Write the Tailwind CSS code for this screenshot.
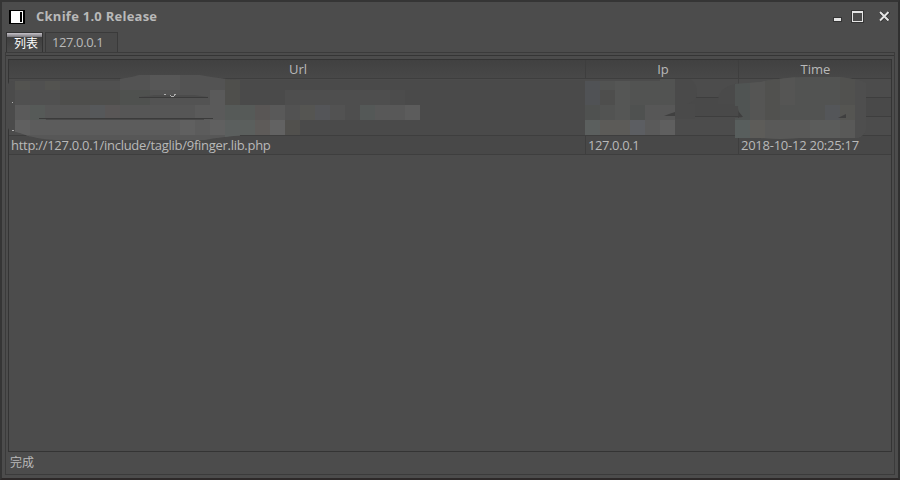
<!DOCTYPE html>
<html lang="zh">
<head>
<meta charset="utf-8">
<title>Cknife 1.0 Release</title>
<script src="https://cdn.jsdelivr.net/npm/@tailwindcss/browser@4"></script>
</head>
<body class="w-[900px] h-[480px] overflow-hidden bg-[#4c4c4c] text-[#b9b9b9] text-[13px] leading-[18px] font-['Open_Sans','Noto_Sans_CJK_SC',sans-serif]">
<div class="w-[900px] h-[480px] flex flex-col border-2 border-[#353535] border-r-[#303030] border-b-[#2d2929] px-[2px] pb-[3px]">
  <header class="h-[30px] shrink-0 flex items-center pl-[5px] pr-[5px] pb-[2px]">
    <svg class="w-4 h-[14px] relative top-px" viewBox="0 0 16 14" shape-rendering="crispEdges"><path fill="#000" d="M0 0h16v14H0z"/><path fill="#fff" d="M2 1h12v12H2z"/><path fill="#000" d="M11 2h2v10h-2z"/></svg>
    <h1 class="ml-[11px] font-bold text-[13px] w-[130px] whitespace-nowrap tracking-[0.25px]">Cknife 1.0 Release</h1>
    <svg class="ml-auto w-[60px] h-[14px]" viewBox="831 9 60 14" shape-rendering="crispEdges">
      <path fill="#343434" d="M833 17h9v5h-9zM851 10h13v13h-13z"/>
      <path fill="#e4e4e4" d="M834 18h7v3h-7z"/><path fill="#4a4a4a" d="M853 13h9v8h-9z"/>
      <path fill="none" stroke="#e4e4e4" d="M852.5 11.5h10v10h-10zM852 12.5h11"/>
      <path fill="none" stroke="#343434" stroke-width="4" d="M880 12l9 9M889 12l-9 9"/>
      <path fill="none" stroke="#e4e4e4" stroke-width="2" shape-rendering="auto" d="M880 12l8.5 8.5M888.500 12l-8.500 8.500"/>
    </svg>
  </header>
  <nav class="h-5 shrink-0 flex items-start pl-[2px] gap-[2px]">
    <div class="w-[37px] h-5 border border-b-0 border-[#333] bg-linear-to-b from-[#3b3b3b] to-[#4b4b4b] text-white">
      <div class="h-1 bg-linear-to-b from-[#c6c3c9] to-[#79777c]"></div>
      <div class="pl-[7px] text-[12px] leading-[13px]">列表</div>
    </div>
    <div class="w-[73px] h-5 border border-b-0 border-[#3a3a3a] bg-[#494949] pl-[6px] leading-[19px] tracking-[-0.4px]">127.0.0.1</div>
  </nav>
  <main class="flex-1 flex flex-col border border-[#3b3b3b] mx-px">
    <div class="h-[3px] shrink-0 border-b border-[#353535]"></div>
    <section class="relative h-[393px] mt-[3px] ml-[2px] mr-[2px] border border-[#343434] bg-[#4c4c4c]">
      <div class="grid grid-cols-[577px_153px_1fr] h-[19px] bg-linear-to-b from-[#414141] to-[#484848] border-b border-[#3e3e3e] text-center leading-[18px]">
        <div class="border-r border-[#3e3e3e] pl-[2px]">Url</div><div class="border-r border-[#3e3e3e] pl-[2px]">Ip</div><div class="pl-px">Time</div>
      </div>
      <div class="grid grid-cols-[577px_153px_1fr] h-[19px] border-b border-[#3e3e3e]"><div></div><div class="border-r border-[#424242]"></div></div>
      <div class="grid grid-cols-[577px_153px_1fr] h-[19px] border-b border-[#3e3e3e] bg-[#494949]"><div></div><div class="border-r border-[#424242]"></div></div>
      <div class="grid grid-cols-[577px_153px_1fr] h-[19px] border-b border-[#3e3e3e]"><div></div><div class="border-r border-[#424242]"></div></div>
      <div class="grid grid-cols-[577px_153px_1fr] h-[19px] border-b border-[#3e3e3e] bg-[#484848] leading-[18px] whitespace-nowrap">
        <div class="border-r border-[#3e3e3e] pl-[2px] tracking-[-0.28px]">http://127.0.0.1/include/taglib/9finger.lib.php</div><div class="border-r border-[#3e3e3e] pl-[2px] tracking-[-0.4px]">127.0.0.1</div><div class="pl-[2px] tracking-[-0.25px]">2018-10-12 20:25:17</div>
      </div>
      <svg class="absolute left-[-9px] top-[10px] w-[900px] h-[80px]" viewBox="0 70 900 80">
        <defs>
          <clipPath id="left"><path d="M6 89L9 82L18 80L110 80Q130 78 139 75H200Q228 80 240 80V135.500Q220 137 205 140H55Q35 139 20 133L9 130L6 124Z"/></clipPath>
          <clipPath id="right"><path d="M735 84L760 82Q785 77 805 77H840Q858 79 866 83V128Q865 136 857 138H800L780 139L760 138H735V118H742Q738 112 738 106H735Z"/></clipPath>
        </defs>
        <path fill="#4a4a4a" d="M240 80h345v55H240z"/>
        <g clip-path="url(#left)" shape-rendering="crispEdges">
          <path fill="#4b4b4b" d="M5 75h235v65H5z"/>
          <path fill="#505050" d="M15 81h225v24H15z"/>
          <path fill="#535350" d="M15 81h15v9H15zM45 81h15v9H45z"/>
          <path fill="#535353" d="M120 75h105v30H120z"/><path fill="#575757" d="M150 75h30v15h-30z"/>
          <path fill="#4e4e4c" d="M60 90h60v15H60zM225 78h15v27h-15z"/><path fill="#4f514f" d="M120 90h30v15h-30z"/>
          <path fill="#565656" d="M15 105h225v15H15z"/><path fill="#5a5a5a" d="M15 105h15v15H15zM195 105h15v15h-15zM210 90h15v30h-15z"/>
          <path fill="#56585a" d="M90 105h15v15H90z"/><path fill="#595656" d="M105 105h15v15h-15z"/><path fill="#565a58" d="M225 105h15v15h-15zM30 105h15v15H30z"/>
          <path fill="#5c5c5c" d="M15 120h225v15H15z"/><path fill="#606060" d="M15 120h15v20H15zM210 120h15v15h-15zM180 120h15v15h-15z"/><path fill="#575757" d="M15 135h225v5H15z"/><path fill="#5b5f5e" d="M225 120h15v20h-15z"/>
        </g>
        <g shape-rendering="crispEdges">
          <path fill="#4f4f4c" d="M225 80h15v25h-15z"/>
          <path fill="#4e4e4e" d="M285 90h105v15H285z"/><path fill="#4c4c4c" d="M390 90h15v15h-15z"/>
          <path fill="#555" d="M240 105h45v15h-45z"/><path fill="#565a58" d="M240 105h15v15h-15z"/><path fill="#595655" d="M255 105h15v15h-15z"/><path fill="#595959" d="M270 105h15v15h-15z"/>
          <path fill="#525252" d="M285 105h15v15h-15zM330 105h15v15h-15z"/><path fill="#555552" d="M300 105h15v15h-15z"/><path fill="#545558" d="M315 105h15v15h-15z"/><path fill="#4e4e4e" d="M345 105h15v15h-15z"/><path fill="#545857" d="M360 105h15v15h-15z"/><path fill="#585858" d="M375 105h30v15h-30z"/><path fill="#5c5c5c" d="M405 105h15v15h-15z"/>
          <path fill="#5b5f5d" d="M240 120h15v15h-15z"/><path fill="#5e5b59" d="M255 120h15v15h-15z"/><path fill="#626262" d="M270 120h15v15h-15z"/><path fill="#51504d" d="M285 120h15v15h-15z"/>
        </g>
        <path fill="#4b4b4b" d="M139 97L155 95H194L208 97Z"/>
        <path stroke="#3b3b3b" fill="none" d="M139 97.500H208M39 118.500H213"/>
        <path stroke="#484848" fill="none" d="M46 119.500H204"/>
        <path fill="#b0b0b0" d="M12 102h1v1h-1zM12 130h2v1h-2zM164 94h2v1h-2zM170 95h1v1h3v-2h2v1h-1v1h-1v1h-3v-1h-1z"/>
        <g shape-rendering="crispEdges">
          <path fill="#525352" d="M585 81h75v-2h15v41h-90z"/><path fill="#505255" d="M585 81h15v24h-15z"/><path fill="#4e4e4d" d="M600 90h15v15h-15z"/><path fill="#4f5150" d="M585 105h15v15h-15zM630 105h15v15h-15z"/><path fill="#555655" d="M615 81h15v39h-15z"/><path fill="#575757" d="M645 105h30v15h-30z"/>
          <path fill="#5b5f5e" d="M585 120h15v15h-15z"/><path fill="#5c5b58" d="M600 120h30v15h-30z"/><path fill="#5c5e62" d="M630 120h15v15h-15z"/><path fill="#5a5a5a" d="M645 120h15v15h-15z"/><path fill="#5f5f5f" d="M660 120h15v15h-15z"/>
        </g>
        <path fill="#4a4a4a" d="M675 79H690Q698 84 697 96Q693 105 675 106ZM718 100Q719 88 735 84H740V104H718ZM675 104H695V119H675Z"/>
        <path fill="#404040" d="M664 116L669 114L675 112V116Z"/>
        <g clip-path="url(#right)" shape-rendering="crispEdges">
          <path fill="#525352" d="M735 75h132v65H735z"/><path fill="#505453" d="M735 82h15v38h-15z"/><path fill="#555554" d="M750 75h15v45h-15zM780 75h15v30h-15z"/><path fill="#51514f" d="M765 75h15v45h-15zM840 75h15v30h-15z"/>
          <path fill="#545659" d="M825 105h15v15h-15z"/><path fill="#555552" d="M840 105h15v15h-15z"/><path fill="#585e5d" d="M735 120h15v20h-15z"/><path fill="#5d5c59" d="M750 120h15v20h-15z"/><path fill="#595958" d="M765 120h90v20h-90z"/><path fill="#5b5c5b" d="M810 120h30v20h-30z"/><path fill="#4e4e4e" d="M855 80h12v60h-12z"/>
        </g>
        <path fill="#3f3f3f" d="M838 118L846 114V118ZM739 112L743 117H739Z"/>
      </svg>
    </section>
    <footer class="flex-1 pl-1 leading-[21px] text-[12px]">完成</footer>
  </main>
</div>
</body>
</html>
